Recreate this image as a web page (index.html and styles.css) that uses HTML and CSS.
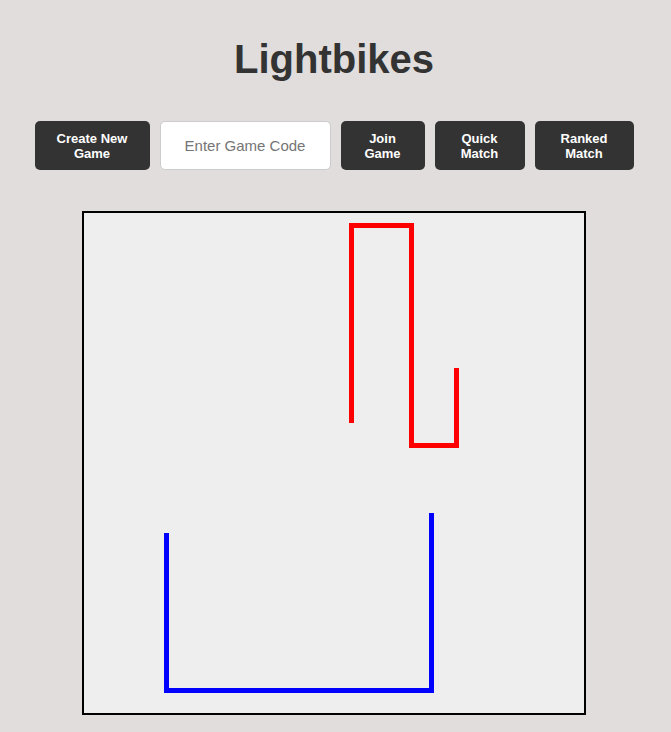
FILE: index.html
```html
<!DOCTYPE html>
<html lang="en">
<head>
<meta charset="utf-8">
<title>Lightbikes</title>
<link rel="stylesheet" href="styles.css">
</head>
<body>
<main class="app">
  <h1 class="title">Lightbikes</h1>
  <div class="controls">
    <button class="btn btn-create">Create New Game</button>
    <input class="code-input" type="text" placeholder="Enter Game Code">
    <button class="btn btn-join">Join Game</button>
    <button class="btn btn-quick">Quick Match</button>
    <button class="btn btn-ranked">Ranked Match</button>
  </div>
  <div class="board">
    <svg class="board-svg" width="500" height="500" viewBox="0 0 500 500">
      <g fill="#ff0000">
        <rect x="265" y="10" width="5" height="200"/>
        <rect x="265" y="10" width="65" height="5"/>
        <rect x="325" y="10" width="5" height="225"/>
        <rect x="325" y="230" width="50" height="5"/>
        <rect x="370" y="155" width="5" height="80"/>
      </g>
      <g fill="#0000ff">
        <rect x="80" y="320" width="5" height="160"/>
        <rect x="80" y="475" width="270" height="5"/>
        <rect x="345" y="300" width="5" height="180"/>
      </g>
    </svg>
  </div>
</main>
</body>
</html>
```

FILE: styles.css
```css
* { box-sizing: border-box; }

html, body {
  margin: 0;
  padding: 0;
  background: #e0dddc;
  font-family: "Liberation Sans", Arial, sans-serif;
}

.app {
  display: flex;
  flex-direction: column;
  align-items: center;
  padding: 36px 3px 0 0;
}

.title {
  margin: 0;
  font-size: 40px;
  line-height: 46px;
  font-weight: bold;
  color: #333333;
}

.controls {
  display: flex;
  gap: 10px;
  margin-top: 39px;
  height: 49px;
}

.btn {
  background: #333333;
  color: #ffffff;
  border: none;
  border-radius: 5px;
  font-family: "Liberation Sans", Arial, sans-serif;
  font-size: 13px;
  font-weight: bold;
  line-height: 15px;
  padding: 0 10px;
  height: 49px;
  cursor: pointer;
}

.btn-create { width: 115px; }
.btn-join { width: 84px; }
.btn-quick { width: 90px; }
.btn-ranked { width: 99px; }

.code-input {
  width: 171px;
  height: 49px;
  border: 1px solid #cccccc;
  border-radius: 5px;
  background: #ffffff;
  font-family: "Liberation Sans", Arial, sans-serif;
  font-size: 15px;
  padding: 0 10px;
  text-align: center;
  color: #333333;
}

.code-input::placeholder {
  color: #757575;
}

.board {
  margin-top: 41px;
  border: 2px solid #000000;
  background: #eeeeee;
  width: 504px;
  height: 504px;
}

.board-svg {
  display: block;
}
```
